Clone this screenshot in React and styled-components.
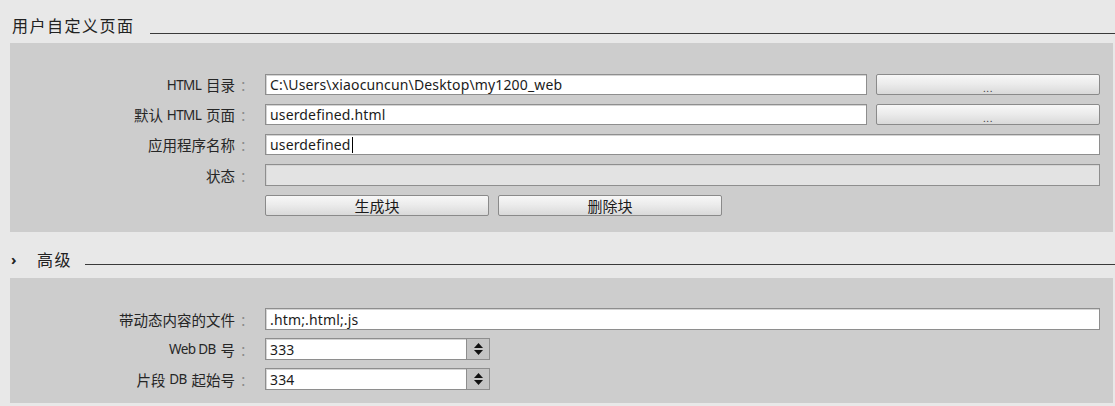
import React from 'react';
import styled, { createGlobalStyle } from 'styled-components';

const GlobalStyle = createGlobalStyle`
  html, body {
    margin: 0;
    padding: 0;
    background: #e8e8e8;
  }
  body {
    font-family: "Noto Sans", "Noto Sans CJK SC", sans-serif;
  }
`;

const Page = styled.div`
  width: 1115px;
  height: 406px;
  background: #e8e8e8;
  overflow: hidden;
`;

const SectionHeader = styled.div`
  display: flex;
  align-items: flex-start;
  height: ${(p) => p.height}px;
  padding-top: ${(p) => p.top}px;
  box-sizing: border-box;
`;

const Chevron = styled.span`
  width: 10px;
  margin-left: 11px;
  margin-right: 16px;
  font-size: 15px;
  line-height: 22px;
  font-weight: 700;
  color: #222;
`;

const Title = styled.span`
  font-family: "Noto Sans CJK SC", sans-serif;
  font-size: 16px;
  line-height: 22px;
  letter-spacing: 1.5px;
  color: #222;
  margin-left: ${(p) => p.indent || 0}px;
`;

const Rule = styled.div`
  flex: 1;
  height: 1px;
  background: #3a3a3a;
  margin-left: ${(p) => p.gap}px;
  margin-top: ${(p) => p.drop}px;
`;

const Panel = styled.div`
  margin-left: 10px;
  width: 1103px;
  background: #cdcdcd;
  box-sizing: border-box;
  padding: ${(p) => p.pad};
  display: flex;
  flex-direction: column;
  gap: ${(p) => p.gap}px;
`;

const Row = styled.div`
  display: flex;
  align-items: center;
  height: ${(p) => p.h || 21}px;
`;

const Label = styled.div`
  width: 244px;
  flex: none;
  text-align: right;
  font-family: "Noto Sans", "Noto Sans CJK SC", sans-serif;
  font-size: 14.5px;
  color: #262626;
  white-space: nowrap;
  margin-right: 11px;
  display: flex;
  justify-content: flex-end;
  align-items: center;
`;

const Latin = styled.span`
  font-size: 13.5px;
  letter-spacing: -0.6px;
  margin-right: 1px;
`;

const Colon = styled.span`
  display: inline-block;
  width: 14px;
  margin-left: 5px;
  font-family: "Noto Sans CJK SC", sans-serif;
  font-size: 13px;
  color: #8a8a8a;
  text-align: left;
`;

const Field = styled.div`
  width: ${(p) => p.w}px;
  height: 100%;
  box-sizing: border-box;
  border: 1px solid #8e8e8e;
  box-shadow: inset 1px 1px 0 #d4d4d4;
  background: ${(p) => (p.disabled ? '#e3e3e3' : '#ffffff')};
  font-family: "Noto Sans", "Noto Sans CJK SC", sans-serif;
  font-size: 14px;
  letter-spacing: 0.15px;
  color: #1b1b1b;
  padding-left: 4px;
  display: flex;
  align-items: center;
  white-space: nowrap;
  overflow: hidden;
`;

const Caret = styled.span`
  display: inline-block;
  width: 1px;
  height: 16px;
  background: #000;
  margin-left: 1px;
`;

const Button = styled.div`
  width: ${(p) => p.w}px;
  height: 100%;
  margin-left: ${(p) => p.ml || 0}px;
  box-sizing: border-box;
  border: 1px solid #8a8a8a;
  border-radius: 2px;
  background: linear-gradient(#f7f7f7 0%, #ececec 45%, #d9d9d9 100%);
  font-family: "Noto Sans CJK SC", sans-serif;
  font-size: 15px;
  color: #1b1b1b;
  display: flex;
  align-items: center;
  justify-content: center;
`;

const Dots = styled.span`
  font-size: 10px;
  color: #444;
  margin-top: 5px;
  letter-spacing: 0.5px;
`;

const Spinner = styled.div`
  width: 23px;
  height: 100%;
  box-sizing: border-box;
  border: 1px solid #8e8e8e;
  border-left: none;
  background: #c4c4c4;
  display: flex;
  align-items: center;
  justify-content: center;
`;

const SpinField = styled.div`
  display: flex;
  height: 100%;
`;

function SpinIcon() {
  return (
    <svg width="11" height="14" viewBox="0 0 11 14">
      <path d="M5.5 1 L10 6 L1 6 Z" fill="#111" />
      <path d="M1 8 L10 8 L5.5 13 Z" fill="#111" />
    </svg>
  );
}

function FormRow({ label, children, h }) {
  return (
    <Row h={h}>
      <Label>
        {label}
        <Colon>：</Colon>
      </Label>
      {children}
    </Row>
  );
}

export default function App() {
  return (
    <Page>
      <GlobalStyle />
      <SectionHeader height={43} top={14}>
        <Title indent={12}>用户自定义页面</Title>
        <Rule gap={15} drop={19} />
      </SectionHeader>
      <Panel pad="31px 0 16px 0" gap={9}>
        <FormRow label={<><Latin>HTML</Latin>&nbsp;目录</>}>
          <Field w={602}>C:\Users\xiaocuncun\Desktop\my1200_web</Field>
          <Button w={224} ml={9}>
            <Dots>...</Dots>
          </Button>
        </FormRow>
        <FormRow label={<>默认&nbsp;<Latin>HTML</Latin>&nbsp;页面</>}>
          <Field w={602}>userdefined.html</Field>
          <Button w={224} ml={9}>
            <Dots>...</Dots>
          </Button>
        </FormRow>
        <FormRow label="应用程序名称">
          <Field w={835}>
            userdefined
            <Caret />
          </Field>
        </FormRow>
        <FormRow label="状态" h={22}>
          <Field w={835} disabled />
        </FormRow>
        <Row>
          <Label />
          <Button w={224}>生成块</Button>
          <Button w={224} ml={9}>删除块</Button>
        </Row>
      </Panel>
      <SectionHeader height={46} top={16}>
        <Chevron>›</Chevron>
        <Title>高级</Title>
        <Rule gap={13} drop={16} />
      </SectionHeader>
      <Panel pad="30px 0 13px 0" gap={8}>
        <FormRow label="带动态内容的文件" h={22}>
          <Field w={835}>.htm;.html;.js</Field>
        </FormRow>
        <FormRow label={<><Latin>Web DB</Latin>&nbsp;号</>} h={22}>
          <SpinField>
            <Field w={202}>333</Field>
            <Spinner>
              <SpinIcon />
            </Spinner>
          </SpinField>
        </FormRow>
        <FormRow label={<>片段&nbsp;<Latin>DB</Latin>&nbsp;起始号</>} h={22}>
          <SpinField>
            <Field w={202}>334</Field>
            <Spinner>
              <SpinIcon />
            </Spinner>
          </SpinField>
        </FormRow>
      </Panel>
    </Page>
  );
}
